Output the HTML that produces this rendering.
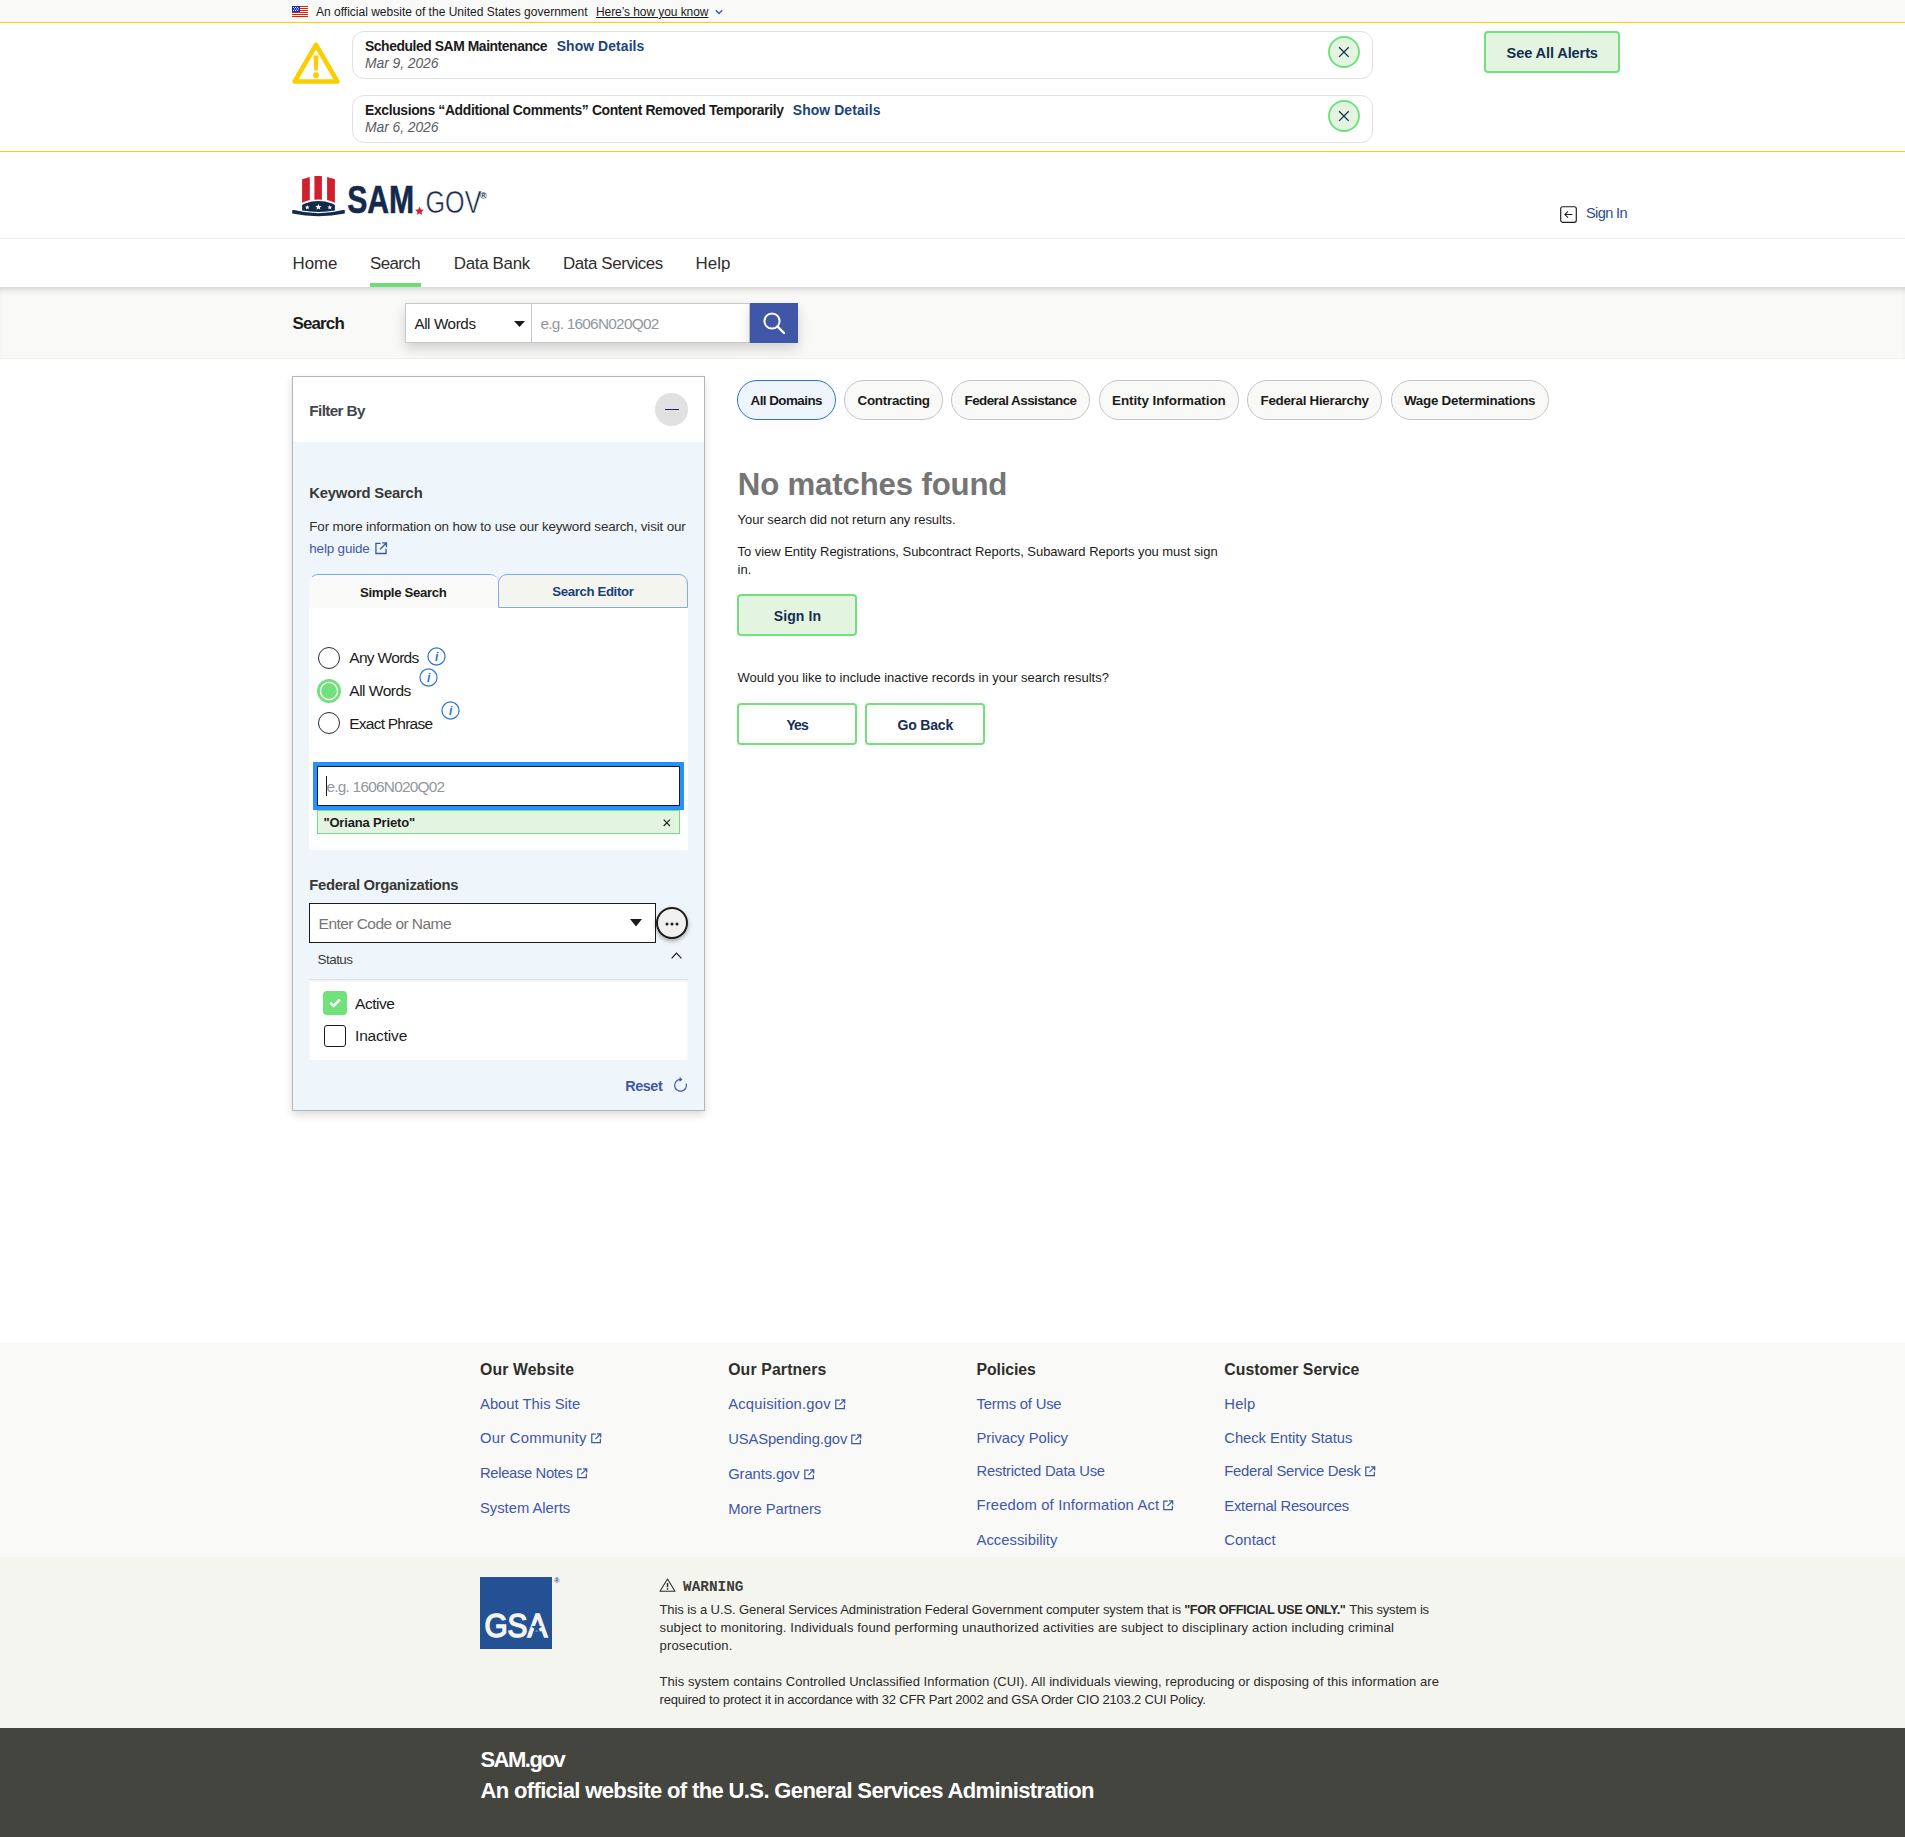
<!DOCTYPE html>
<html lang="en">
<head>
<meta charset="utf-8">
<title>SAM.gov | Search</title>
<style>
html,body{margin:0;padding:0;}
body{width:1905px;height:1837px;position:relative;overflow:hidden;background:#fff;font-family:"Liberation Sans", sans-serif;color:#1b1b1b;}
.b{position:absolute;box-sizing:border-box;}
.t{position:absolute;white-space:nowrap;line-height:1;margin:0;padding:0;}
svg{position:absolute;overflow:visible;}
a{color:inherit;text-decoration:none;}
</style>
</head>
<body>
<div class="b" style="left:0px;top:0px;width:1905px;height:22px;background:#f9f9f7;"></div>
<div class="b" style="left:0px;top:22px;width:1905px;height:1px;background:#face00;"></div>
<svg style="left:292px;top:6px" width="16" height="11" viewBox="0 0 16 11">
<rect width="16" height="11" fill="#fff"/>
<g fill="#e52207"><rect y="0" width="16" height="1"/><rect y="2" width="16" height="1"/><rect y="4" width="16" height="1"/><rect y="6" width="16" height="1"/><rect y="8" width="16" height="1"/><rect y="10" width="16" height="1"/></g>
<rect width="8" height="6" fill="#1a2aa8"/>
<g fill="#fff"><rect x="1" y="1" width="1" height="1"/><rect x="3" y="1" width="1" height="1"/><rect x="5" y="1" width="1" height="1"/><rect x="2" y="2.5" width="1" height="1"/><rect x="4" y="2.5" width="1" height="1"/><rect x="6" y="2.5" width="1" height="1"/><rect x="1" y="4" width="1" height="1"/><rect x="3" y="4" width="1" height="1"/><rect x="5" y="4" width="1" height="1"/></g>
</svg>
<svg style="left:715px;top:9px" width="8" height="6" viewBox="0 0 8 6"><path d="M0.8 1.2 L4 4.4 L7.2 1.2" fill="none" stroke="#3f57a6" stroke-width="1.4"/></svg>
<div class="b" style="left:0px;top:151px;width:1905px;height:1px;background:#face00;"></div>
<svg style="left:292px;top:42px" width="48" height="42" viewBox="0 0 48 42">
<path d="M24 2.8 L45.4 39.5 L2.6 39.5 Z" fill="none" stroke="#face00" stroke-width="4.6" stroke-linejoin="round"/>
<path d="M21.4 13.5 h5.2 l-0.9 15 h-3.4 z" fill="#face00"/><circle cx="24" cy="33.2" r="3" fill="#face00"/>
</svg>
<div class="b" style="left:352px;top:31px;width:1021px;height:48px;background:#fff;border:1px solid #dfe1e2;border-radius:12px;"></div>
<div class="b" style="left:352px;top:95px;width:1021px;height:48px;background:#fff;border:1px solid #dfe1e2;border-radius:12px;"></div>
<svg style="left:1328px;top:35.8px" width="32" height="32" viewBox="0 0 32 32">
<circle cx="16" cy="16" r="15" fill="#e3f5e1" stroke="#70e17b" stroke-width="1.9"/>
<path d="M11.1 11.3 L20.7 20.9 M20.7 11.3 L11.1 20.9" stroke="#162e51" stroke-width="1.3" fill="none"/></svg>
<svg style="left:1328px;top:99.9px" width="32" height="32" viewBox="0 0 32 32">
<circle cx="16" cy="16" r="15" fill="#e3f5e1" stroke="#70e17b" stroke-width="1.9"/>
<path d="M11.1 11.3 L20.7 20.9 M20.7 11.3 L11.1 20.9" stroke="#162e51" stroke-width="1.3" fill="none"/></svg>
<div class="b" style="left:1484px;top:31px;width:136px;height:42px;background:#e3f5e1;border:2px solid #70e17b;border-radius:4px;"></div>
<svg style="left:292px;top:174px" width="54" height="46" viewBox="0 0 54 46">
<path d="M10.1 5.2 L17.8 3 V26 Q13.5 27 10.1 28.7 Z" fill="#d0202e"/>
<path d="M22.4 2 H29.9 V25.7 Q26.2 25.4 22.4 25.7 Z" fill="#d0202e"/>
<path d="M35.1 3 L42.9 5.2 V28.7 Q39.5 27 35.1 26 Z" fill="#d0202e"/>
<path d="M10.1 31.3 Q10.3 30.2 13 29.4 Q26.5 24.8 40 29.4 Q42.7 30.2 42.9 31.3 V36.6 Q26.5 39.2 10.1 36.6 Z" fill="#14294b"/>
<path d="M0.2 36.3 Q1 35.6 2.2 36.1 Q26.5 42.6 50.8 36.1 Q52 35.6 52.8 36.3 V39.6 Q26.5 44.7 0.2 39.6 Z" fill="#14294b"/>
<g fill="#fff"><path d="M15.30 30.90 L15.92 32.55 L17.68 32.63 L16.30 33.72 L16.77 35.42 L15.30 34.45 L13.83 35.42 L14.30 33.72 L12.92 32.63 L14.68 32.55Z"/><path d="M26.40 29.80 L27.21 31.98 L29.54 32.08 L27.72 33.53 L28.34 35.77 L26.40 34.49 L24.46 35.77 L25.08 33.53 L23.26 32.08 L25.59 31.98Z"/><path d="M37.80 30.90 L38.42 32.55 L40.18 32.63 L38.80 33.72 L39.27 35.42 L37.80 34.45 L36.33 35.42 L36.80 33.72 L35.42 32.63 L37.18 32.55Z"/></g>
</svg>
<svg style="left:347px;top:180px" width="145" height="40" viewBox="0 0 145 40">
<text x="0.2" y="32.7" font-family="Liberation Sans, sans-serif" font-weight="700" font-size="39.4" fill="#14294b" stroke="#14294b" stroke-width="0.6" textLength="67" lengthAdjust="spacingAndGlyphs">SAM</text>
<path d="M72.5 26.6l1.25 2.9 3.15.3-2.4 2.1.7 3.1-2.7-1.65-2.7 1.65.7-3.1-2.4-2.1 3.15-.3z" fill="#d0202e"/>
<text x="78.6" y="33.3" font-family="Liberation Sans, sans-serif" font-weight="400" font-size="31.6" fill="#14294b" stroke="#fff" stroke-width="0.5" textLength="55.8" lengthAdjust="spacingAndGlyphs">GOV</text>
<text x="133.3" y="19.2" font-family="Liberation Sans, sans-serif" font-weight="700" font-size="8.6" fill="#14294b">®</text>
</svg>
<svg style="left:1560px;top:206px" width="17" height="17" viewBox="0 0 17 17">
<rect x="0.7" y="0.7" width="15.6" height="15.6" rx="2" fill="none" stroke="#1b1b1b" stroke-width="1.15"/>
<path d="M12.4 8.5 H5 M8 5.4 L4.9 8.5 L8 11.6" fill="none" stroke="#1b1b1b" stroke-width="1.05"/></svg>
<div class="b" style="left:0px;top:238px;width:1905px;height:1px;background:#f0f0ec;"></div>
<div class="b" style="left:370px;top:283px;width:51px;height:4px;background:#6ddd7a;"></div>
<div class="b" style="left:0px;top:287px;width:1905px;height:72px;background:#f9f9f7;box-shadow:inset 0 7px 8px -6px rgba(0,0,0,0.22);border-bottom:1px solid #f0f0ec;"></div>
<div class="b" style="left:405px;top:303px;width:345px;height:40px;background:#fff;border:1px solid #c6c8ca;box-shadow:0 6px 12px rgba(0,0,0,0.16);"></div>
<div class="b" style="left:531px;top:303px;width:1px;height:40px;background:#c6cace;"></div>
<div class="b" style="left:750px;top:303px;width:48px;height:40px;background:#3f57a6;box-shadow:0 6px 12px rgba(0,0,0,0.16);"></div>
<svg style="left:513.5px;top:321px" width="11" height="6" viewBox="0 0 11 6"><path d="M0 0 H11 L5.5 6 Z" fill="#1b1b1b"/></svg>
<svg style="left:762px;top:311px" width="24" height="24" viewBox="0 0 24 24">
<circle cx="10" cy="10" r="7.6" fill="none" stroke="#fff" stroke-width="2"/><path d="M15.6 15.6 L22 22" stroke="#fff" stroke-width="2.4" stroke-linecap="round"/></svg>
<div class="b" style="left:292px;top:376px;width:413px;height:735px;background:#eff6fb;border:1px solid #b3b6b8;box-shadow:0 4px 8px rgba(0,0,0,0.14);"></div>
<div class="b" style="left:293px;top:377px;width:411px;height:65px;background:#fff;"></div>
<div class="b" style="left:655.3px;top:393.1px;width:32.6px;height:32.6px;background:#e1e1e1;border-radius:50%;"></div>
<div class="b" style="left:665px;top:408.5px;width:14px;height:1.3px;background:#162e51;"></div>
<svg style="left:374.8px;top:542.4px" width="12.4" height="12.4" viewBox="0 0 12 12"><path d="M5.4 1.3 H0.9 V11.1 H10.7 V6.6" fill="none" stroke="#3f57a6" stroke-width="1.3"/><path d="M6.9 0.9 H11.1 V5.1 M11 1 L5 7" fill="none" stroke="#3f57a6" stroke-width="1.3"/></svg>
<div class="b" style="left:309px;top:574px;width:190px;height:35px;background:#f9f9f7;border:1px solid #7ea9f5;border-radius:9px 9px 0 0;border-bottom:none;border-left-color:transparent;border-right:none;"></div>
<div class="b" style="left:498px;top:574px;width:190px;height:34px;background:#f5f5f0;border:1px solid #7ea9f5;border-radius:9px 9px 0 0;"></div>
<div class="b" style="left:309px;top:608px;width:379px;height:242px;background:#fff;"></div>
<div class="b" style="left:318px;top:646.7px;width:22px;height:22px;border-radius:50%;border:1.3px solid #2e2e2a;background:#fff"></div>
<svg style="left:317px;top:679px" width="24" height="24" viewBox="0 0 24 24"><circle cx="12" cy="12" r="10.6" fill="#fff" stroke="#70e17b" stroke-width="2.7"/><circle cx="12" cy="12" r="7.9" fill="#70e17b"/></svg>
<div class="b" style="left:318px;top:711.8px;width:22px;height:22px;border-radius:50%;border:1.3px solid #2e2e2a;background:#fff"></div>
<svg style="left:426.6px;top:646.5px" width="19" height="19" viewBox="0 0 19 19"><circle cx="9.5" cy="9.5" r="8.55" fill="none" stroke="#2672de" stroke-width="1.2"/>
<text x="9.7" y="14" text-anchor="middle" font-family="Liberation Sans, sans-serif" font-style="italic" font-weight="700" font-size="12" fill="#2672de">i</text></svg>
<svg style="left:418.7px;top:667.7px" width="19" height="19" viewBox="0 0 19 19"><circle cx="9.5" cy="9.5" r="8.55" fill="none" stroke="#2672de" stroke-width="1.2"/>
<text x="9.7" y="14" text-anchor="middle" font-family="Liberation Sans, sans-serif" font-style="italic" font-weight="700" font-size="12" fill="#2672de">i</text></svg>
<svg style="left:440.7px;top:700.6px" width="19" height="19" viewBox="0 0 19 19"><circle cx="9.5" cy="9.5" r="8.55" fill="none" stroke="#2672de" stroke-width="1.2"/>
<text x="9.7" y="14" text-anchor="middle" font-family="Liberation Sans, sans-serif" font-style="italic" font-weight="700" font-size="12" fill="#2672de">i</text></svg>
<div class="b" style="left:313px;top:762px;width:371px;height:48px;background:#2491ff;"></div>
<div class="b" style="left:317px;top:766px;width:363px;height:40px;background:#fff;border:1px solid #1b1b1b;"></div>
<div class="b" style="left:326px;top:776px;width:1px;height:20px;background:#1b1b1b;"></div>
<div class="b" style="left:317px;top:810px;width:363px;height:24px;background:#e3f5e1;border:1px solid #70e17b;"></div>
<svg style="left:663px;top:819.4px" width="8" height="8" viewBox="0 0 8 8"><path d="M0.7 0.7 L7 7 M7 0.7 L0.7 7" stroke="#1b1b1b" stroke-width="1.1"/></svg>
<div class="b" style="left:309px;top:903px;width:347px;height:40px;background:#fff;border:1px solid #1b1b1b;"></div>
<svg style="left:630px;top:919.3px" width="12" height="7.5" viewBox="0 0 12 7.5"><path d="M0 0 H12 L6 7.5 Z" fill="#1b1b1b"/></svg>
<div class="b" style="left:656px;top:907px;width:32px;height:32px;background:#f0f0f0;border:2px solid #1b1b1b;border-radius:50%;box-shadow:0 2px 4px rgba(0,0,0,0.35);"></div>
<svg style="left:665px;top:921.6px" width="14" height="4" viewBox="0 0 14 4"><circle cx="2" cy="2" r="1.5" fill="#1b1b1b"/><circle cx="7" cy="2" r="1.5" fill="#1b1b1b"/><circle cx="12" cy="2" r="1.5" fill="#1b1b1b"/></svg>
<svg style="left:671px;top:951.5px" width="11" height="7" viewBox="0 0 11 7"><path d="M0.6 6.4 L5.5 1.2 L10.4 6.4" fill="none" stroke="#1b1b1b" stroke-width="1.2"/></svg>
<div class="b" style="left:309px;top:979px;width:379px;height:81px;background:#fff;border-top:1px solid #dfe1e2;box-shadow:inset 0 1px 2px rgba(0,0,0,0.08);"></div>
<div class="b" style="left:323px;top:991px;width:24px;height:24px;background:#70e17b;border-radius:4px;"></div>
<svg style="left:328px;top:996px" width="14" height="14" viewBox="0 0 14 14"><path d="M2.2 6.6 L5.6 10 L11.8 3.6" fill="none" stroke="#fff" stroke-width="2.6"/></svg>
<div class="b" style="left:324px;top:1025px;width:22px;height:22px;background:#fff;border:1.5px solid #1b1b1b;border-radius:3px;"></div>
<svg style="left:672.5px;top:1076px" width="15" height="16" viewBox="0 0 15 16"><path d="M7.6 3.4 A5.9 5.9 0 1 0 13.2 7.6" fill="none" stroke="#3f57a6" stroke-width="1.2"/><path d="M6.6 0.8 L9.4 3.4 L6.6 6" fill="#3f57a6" stroke="none"/></svg>
<div class="b" style="left:737px;top:380px;width:98.5px;height:40px;background:#eef5fd;border:1px solid #2672de;border-radius:20px;"></div>
<div class="b" style="left:844px;top:380px;width:98.6px;height:40px;background:#f9f9f7;border:1px solid #c3c5c7;border-radius:20px;"></div>
<div class="b" style="left:951px;top:380px;width:139.4px;height:40px;background:#f9f9f7;border:1px solid #c3c5c7;border-radius:20px;"></div>
<div class="b" style="left:1099px;top:380px;width:139.7px;height:40px;background:#f9f9f7;border:1px solid #c3c5c7;border-radius:20px;"></div>
<div class="b" style="left:1247px;top:380px;width:135.4px;height:40px;background:#f9f9f7;border:1px solid #c3c5c7;border-radius:20px;"></div>
<div class="b" style="left:1391px;top:380px;width:157.6px;height:40px;background:#f9f9f7;border:1px solid #c3c5c7;border-radius:20px;"></div>
<div class="b" style="left:737px;top:594px;width:120px;height:42px;background:#e3f5e1;border:2px solid #70e17b;border-radius:4px;"></div>
<div class="b" style="left:737px;top:703px;width:120px;height:42px;background:#fff;border:2px solid #70e17b;border-radius:4px;"></div>
<div class="b" style="left:865px;top:703px;width:120px;height:42px;background:#fff;border:2px solid #70e17b;border-radius:4px;"></div>
<div class="b" style="left:0px;top:1343px;width:1905px;height:214px;background:#f9f9f7;"></div>
<div class="b" style="left:0px;top:1557px;width:1905px;height:171px;background:#f5f5f0;"></div>
<div class="b" style="left:0px;top:1728px;width:1905px;height:109px;background:#454540;"></div>
<svg style="left:590.5px;top:1433.1000000000001px" width="10.5" height="10.5" viewBox="0 0 12 12"><path d="M5.4 1.3 H0.9 V11.1 H10.7 V6.6" fill="none" stroke="#3f57a6" stroke-width="1.4"/><path d="M6.9 0.9 H11.1 V5.1 M11 1 L5 7" fill="none" stroke="#3f57a6" stroke-width="1.4"/></svg>
<svg style="left:576.9px;top:1467.7px" width="10.5" height="10.5" viewBox="0 0 12 12"><path d="M5.4 1.3 H0.9 V11.1 H10.7 V6.6" fill="none" stroke="#3f57a6" stroke-width="1.4"/><path d="M6.9 0.9 H11.1 V5.1 M11 1 L5 7" fill="none" stroke="#3f57a6" stroke-width="1.4"/></svg>
<svg style="left:834.6px;top:1399.0px" width="10.5" height="10.5" viewBox="0 0 12 12"><path d="M5.4 1.3 H0.9 V11.1 H10.7 V6.6" fill="none" stroke="#3f57a6" stroke-width="1.4"/><path d="M6.9 0.9 H11.1 V5.1 M11 1 L5 7" fill="none" stroke="#3f57a6" stroke-width="1.4"/></svg>
<svg style="left:851.4px;top:1434.1000000000001px" width="10.5" height="10.5" viewBox="0 0 12 12"><path d="M5.4 1.3 H0.9 V11.1 H10.7 V6.6" fill="none" stroke="#3f57a6" stroke-width="1.4"/><path d="M6.9 0.9 H11.1 V5.1 M11 1 L5 7" fill="none" stroke="#3f57a6" stroke-width="1.4"/></svg>
<svg style="left:803.6px;top:1468.8px" width="10.5" height="10.5" viewBox="0 0 12 12"><path d="M5.4 1.3 H0.9 V11.1 H10.7 V6.6" fill="none" stroke="#3f57a6" stroke-width="1.4"/><path d="M6.9 0.9 H11.1 V5.1 M11 1 L5 7" fill="none" stroke="#3f57a6" stroke-width="1.4"/></svg>
<svg style="left:1163.2px;top:1500.2px" width="10.5" height="10.5" viewBox="0 0 12 12"><path d="M5.4 1.3 H0.9 V11.1 H10.7 V6.6" fill="none" stroke="#3f57a6" stroke-width="1.4"/><path d="M6.9 0.9 H11.1 V5.1 M11 1 L5 7" fill="none" stroke="#3f57a6" stroke-width="1.4"/></svg>
<svg style="left:1364.8px;top:1466.2px" width="10.5" height="10.5" viewBox="0 0 12 12"><path d="M5.4 1.3 H0.9 V11.1 H10.7 V6.6" fill="none" stroke="#3f57a6" stroke-width="1.4"/><path d="M6.9 0.9 H11.1 V5.1 M11 1 L5 7" fill="none" stroke="#3f57a6" stroke-width="1.4"/></svg>
<div class="b" style="left:480px;top:1577px;width:72px;height:72px;background:#245094;"></div>
<svg style="left:480px;top:1577px" width="72" height="72" viewBox="0 0 72 72">
<text x="4.4" y="60" font-family="Liberation Sans, sans-serif" font-size="34" fill="#f4f4ef" stroke="#f4f4ef" stroke-width="1.5" textLength="63" lengthAdjust="spacingAndGlyphs">GSA</text>
<path d="M56.6 45.2 l1.45 3.9 4.15 0.1 -3.3 2.55 1.2 4 -3.5 -2.35 -3.5 2.35 1.2 -4 -3.3 -2.55 4.15 -0.1z" fill="#245094"/>
</svg>
<svg style="left:659px;top:1578px" width="17" height="14" viewBox="0 0 17 14"><path d="M8.5 1 L16 13.2 H1 Z" fill="none" stroke="#2e2e2a" stroke-width="1.1" stroke-linejoin="round"/><path d="M8.5 5 V9.2 M8.5 10.3 V11.8" stroke="#2e2e2a" stroke-width="1.5"/></svg>
<span class="t" style="left:316px;top:6.00px;font-size:12px;letter-spacing:0.005px;">An official website of the United States government</span>
<span class="t" style="left:596px;top:6.00px;font-size:12px;text-decoration:underline;letter-spacing:-0.075px;">Here’s how you know</span>
<span class="t" style="left:365px;top:40.00px;font-size:13.9px;font-weight:700;letter-spacing:-0.436px;">Scheduled SAM Maintenance</span>
<span class="t" style="left:556.7px;top:40.00px;font-size:13.9px;font-weight:700;color:#1a4480;letter-spacing:0.104px;">Show Details</span>
<span class="t" style="left:365px;top:57.00px;font-size:13.9px;color:#565c65;font-style:italic;letter-spacing:-0.064px;">Mar 9, 2026</span>
<span class="t" style="left:365px;top:104.00px;font-size:13.9px;font-weight:700;letter-spacing:-0.351px;">Exclusions “Additional Comments” Content Removed Temporarily</span>
<span class="t" style="left:792.8px;top:104.00px;font-size:13.9px;font-weight:700;color:#1a4480;letter-spacing:0.104px;">Show Details</span>
<span class="t" style="left:365px;top:121.00px;font-size:13.9px;color:#565c65;font-style:italic;letter-spacing:-0.064px;">Mar 6, 2026</span>
<span class="t" style="left:1506.6px;top:46.00px;font-size:14.6px;font-weight:700;color:#162e51;letter-spacing:-0.124px;">See All Alerts</span>
<span class="t" style="left:1586px;top:206.00px;font-size:14.6px;color:#2e4c8c;letter-spacing:-0.640px;">Sign In</span>
<span class="t" style="left:292.5px;top:256.00px;font-size:16.9px;color:#2e2e2a;letter-spacing:-0.021px;">Home</span>
<span class="t" style="left:370px;top:256.00px;font-size:16.9px;color:#2e2e2a;letter-spacing:-0.586px;">Search</span>
<span class="t" style="left:453.8px;top:256.00px;font-size:16.9px;color:#2e2e2a;letter-spacing:-0.309px;">Data Bank</span>
<span class="t" style="left:562.9px;top:256.00px;font-size:16.9px;color:#2e2e2a;letter-spacing:-0.395px;">Data Services</span>
<span class="t" style="left:695.5px;top:256.00px;font-size:16.9px;color:#2e2e2a;letter-spacing:0.017px;">Help</span>
<span class="t" style="left:292.5px;top:316.00px;font-size:16.9px;font-weight:700;letter-spacing:-0.829px;">Search</span>
<span class="t" style="left:414.4px;top:316.00px;font-size:15.2px;letter-spacing:-0.388px;">All Words</span>
<span class="t" style="left:540.5px;top:316.00px;font-size:15.4px;color:#92979c;letter-spacing:-0.752px;">e.g. 1606N020Q02</span>
<span class="t" style="left:309.3px;top:403.00px;font-size:15.3px;font-weight:700;color:#44464b;letter-spacing:-0.625px;">Filter By</span>
<span class="t" style="left:309.3px;top:486.00px;font-size:14.8px;font-weight:700;color:#383836;letter-spacing:-0.198px;">Keyword Search</span>
<span class="t" style="left:309.3px;top:520.00px;font-size:13.4px;color:#2e2e2a;letter-spacing:-0.143px;">For more information on how to use our keyword search, visit our</span>
<span class="t" style="left:309.3px;top:542.00px;font-size:13.4px;color:#3f57a6;letter-spacing:-0.146px;">help guide</span>
<span class="t" style="left:360px;top:586.00px;font-size:13.2px;font-weight:700;letter-spacing:-0.349px;">Simple Search</span>
<span class="t" style="left:552.3px;top:585.00px;font-size:13.2px;font-weight:700;color:#1a3e7c;letter-spacing:-0.354px;">Search Editor</span>
<span class="t" style="left:349.3px;top:650.00px;font-size:15.5px;letter-spacing:-0.691px;">Any Words</span>
<span class="t" style="left:349.3px;top:683.00px;font-size:15.5px;letter-spacing:-0.506px;">All Words</span>
<span class="t" style="left:349.3px;top:716.00px;font-size:15.5px;letter-spacing:-0.763px;">Exact Phrase</span>
<span class="t" style="left:326.4px;top:779.00px;font-size:15.4px;color:#92979c;letter-spacing:-0.752px;">e.g. 1606N020Q02</span>
<span class="t" style="left:323.4px;top:816.00px;font-size:13px;font-weight:700;letter-spacing:-0.162px;">"Oriana Prieto"</span>
<span class="t" style="left:309.3px;top:878.00px;font-size:14.8px;font-weight:700;color:#383836;letter-spacing:-0.310px;">Federal Organizations</span>
<span class="t" style="left:318.6px;top:916.00px;font-size:15.5px;color:#757575;letter-spacing:-0.539px;">Enter Code or Name</span>
<span class="t" style="left:317.6px;top:953.00px;font-size:13.4px;color:#3a3a38;letter-spacing:-0.514px;">Status</span>
<span class="t" style="left:355px;top:996.00px;font-size:15.5px;letter-spacing:-0.444px;">Active</span>
<span class="t" style="left:355px;top:1028.00px;font-size:15.5px;letter-spacing:-0.160px;">Inactive</span>
<span class="t" style="left:625.3px;top:1079.00px;font-size:14.4px;font-weight:700;color:#3f57a6;letter-spacing:-0.451px;">Reset</span>
<span class="t" style="left:750.5px;top:394.00px;font-size:13.4px;font-weight:700;letter-spacing:-0.539px;">All Domains</span>
<span class="t" style="left:857.5px;top:394.00px;font-size:13.4px;font-weight:700;letter-spacing:-0.264px;">Contracting</span>
<span class="t" style="left:964.5px;top:394.00px;font-size:13.4px;font-weight:700;letter-spacing:-0.534px;">Federal Assistance</span>
<span class="t" style="left:1112px;top:394.00px;font-size:13.4px;font-weight:700;letter-spacing:-0.051px;">Entity Information</span>
<span class="t" style="left:1260.5px;top:394.00px;font-size:13.4px;font-weight:700;letter-spacing:-0.290px;">Federal Hierarchy</span>
<span class="t" style="left:1404px;top:394.00px;font-size:13.4px;font-weight:700;letter-spacing:-0.273px;">Wage Determinations</span>
<span class="t" style="left:737.8px;top:469.00px;font-size:31.2px;font-weight:700;color:#757575;letter-spacing:-0.163px;">No matches found</span>
<span class="t" style="left:737.6px;top:513.00px;font-size:13px;letter-spacing:-0.032px;">Your search did not return any results.</span>
<span class="t" style="left:737.6px;top:545.00px;font-size:13px;letter-spacing:-0.042px;">To view Entity Registrations, Subcontract Reports, Subaward Reports you must sign</span>
<span class="t" style="left:737.6px;top:563.00px;font-size:13px;letter-spacing:0.033px;">in.</span>
<span class="t" style="left:773.7px;top:609.00px;font-size:14px;font-weight:700;color:#162e51;letter-spacing:0.105px;">Sign In</span>
<span class="t" style="left:737.6px;top:671.00px;font-size:13px;letter-spacing:-0.020px;">Would you like to include inactive records in your search results?</span>
<span class="t" style="left:786.4px;top:718.00px;font-size:14px;font-weight:700;color:#162e51;letter-spacing:-0.920px;">Yes</span>
<span class="t" style="left:897.5px;top:718.00px;font-size:14px;font-weight:700;color:#162e51;letter-spacing:-0.185px;">Go Back</span>
<span class="t" style="left:480px;top:1362.00px;font-size:15.8px;font-weight:700;color:#2e2e2a;letter-spacing:0.123px;">Our Website</span>
<span class="t" style="left:728.2px;top:1362.00px;font-size:15.8px;font-weight:700;color:#2e2e2a;letter-spacing:0.147px;">Our Partners</span>
<span class="t" style="left:976.5px;top:1362.00px;font-size:15.8px;font-weight:700;color:#2e2e2a;letter-spacing:-0.060px;">Policies</span>
<span class="t" style="left:1224.3px;top:1362.00px;font-size:15.8px;font-weight:700;color:#2e2e2a;letter-spacing:0.044px;">Customer Service</span>
<span class="t" style="left:480px;top:1397.00px;font-size:14.8px;color:#3f57a6;letter-spacing:0.009px;">About This Site</span>
<span class="t" style="left:480px;top:1431.00px;font-size:14.8px;color:#3f57a6;letter-spacing:0.241px;">Our Community</span>
<span class="t" style="left:480px;top:1466.00px;font-size:14.8px;color:#3f57a6;letter-spacing:-0.347px;">Release Notes</span>
<span class="t" style="left:480px;top:1501.00px;font-size:14.8px;color:#3f57a6;letter-spacing:-0.021px;">System Alerts</span>
<span class="t" style="left:728.2px;top:1397.00px;font-size:14.8px;color:#3f57a6;letter-spacing:0.205px;">Acquisition.gov</span>
<span class="t" style="left:728.2px;top:1432.00px;font-size:14.8px;color:#3f57a6;letter-spacing:-0.124px;">USASpending.gov</span>
<span class="t" style="left:728.2px;top:1467.00px;font-size:14.8px;color:#3f57a6;letter-spacing:-0.108px;">Grants.gov</span>
<span class="t" style="left:728.2px;top:1502.00px;font-size:14.8px;color:#3f57a6;letter-spacing:-0.062px;">More Partners</span>
<span class="t" style="left:976.5px;top:1397.00px;font-size:14.8px;color:#3f57a6;letter-spacing:-0.187px;">Terms of Use</span>
<span class="t" style="left:976.5px;top:1431.00px;font-size:14.8px;color:#3f57a6;letter-spacing:-0.053px;">Privacy Policy</span>
<span class="t" style="left:976.5px;top:1464.00px;font-size:14.8px;color:#3f57a6;letter-spacing:-0.211px;">Restricted Data Use</span>
<span class="t" style="left:976.5px;top:1498.00px;font-size:14.8px;color:#3f57a6;letter-spacing:0.169px;">Freedom of Information Act</span>
<span class="t" style="left:976.5px;top:1533.00px;font-size:14.8px;color:#3f57a6;letter-spacing:0.026px;">Accessibility</span>
<span class="t" style="left:1224.3px;top:1397.00px;font-size:14.8px;color:#3f57a6;letter-spacing:0.188px;">Help</span>
<span class="t" style="left:1224.3px;top:1431.00px;font-size:14.8px;color:#3f57a6;letter-spacing:-0.057px;">Check Entity Status</span>
<span class="t" style="left:1224.3px;top:1464.00px;font-size:14.8px;color:#3f57a6;letter-spacing:-0.261px;">Federal Service Desk</span>
<span class="t" style="left:1224.3px;top:1499.00px;font-size:14.8px;color:#3f57a6;letter-spacing:-0.249px;">External Resources</span>
<span class="t" style="left:1224.3px;top:1533.00px;font-size:14.8px;color:#3f57a6;letter-spacing:0.067px;">Contact</span>
<span class="t" style="left:554.3px;top:1577.00px;font-size:7px;font-weight:700;color:#234e97;">®</span>
<span class="t" style="left:683.1px;top:1580.00px;font-size:14.4px;font-weight:700;color:#3d3d3a;font-family:'Liberation Mono', monospace;letter-spacing:-0.009px;">WARNING</span>
<span class="t" style="left:659.5px;top:1603.00px;font-size:13px;color:#2a2a28;letter-spacing:-0.089px;">This is a U.S. General Services Administration Federal Government computer system that is</span>
<span class="t" style="left:1184.2px;top:1604.00px;font-size:12.8px;font-weight:700;color:#2a2a28;letter-spacing:-0.422px;">"FOR OFFICIAL USE ONLY."</span>
<span class="t" style="left:1349.3px;top:1603.00px;font-size:13px;color:#2a2a28;letter-spacing:-0.196px;">This system is</span>
<span class="t" style="left:659.5px;top:1621.00px;font-size:13px;color:#2a2a28;letter-spacing:0.160px;">subject to monitoring. Individuals found performing unauthorized activities are subject to disciplinary action including criminal</span>
<span class="t" style="left:659.5px;top:1639.00px;font-size:13px;color:#2a2a28;letter-spacing:0.188px;">prosecution.</span>
<span class="t" style="left:659.5px;top:1675.00px;font-size:13px;color:#2a2a28;letter-spacing:0.057px;">This system contains Controlled Unclassified Information (CUI). All individuals viewing, reproducing or disposing of this information are</span>
<span class="t" style="left:659.5px;top:1693.00px;font-size:13px;color:#2a2a28;letter-spacing:-0.196px;">required to protect it in accordance with 32 CFR Part 2002 and GSA Order CIO 2103.2 CUI Policy.</span>
<span class="t" style="left:480.4px;top:1749.00px;font-size:22px;font-weight:700;color:#fff;letter-spacing:-1.471px;">SAM.gov</span>
<span class="t" style="left:480.4px;top:1780.00px;font-size:22px;font-weight:700;color:#fff;letter-spacing:-0.631px;">An official website of the U.S. General Services Administration</span>
</body>
</html>
